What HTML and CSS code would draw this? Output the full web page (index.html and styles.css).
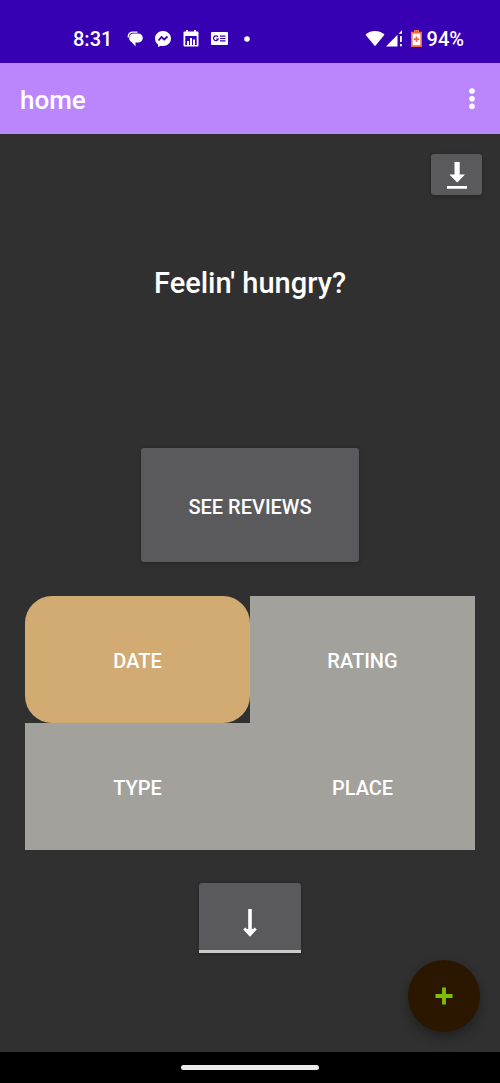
FILE: index.html
```html
<!DOCTYPE html>
<html lang="en">
<head>
<meta charset="utf-8">
<meta name="viewport" content="width=device-width, initial-scale=1">
<title>home</title>
<link rel="stylesheet" href="styles.css">
</head>
<body>
<div class="screen">
  <div class="status">
    <div class="status-group notifications">
      <span class="clock">8:31</span>
      <svg width="16" height="16" viewBox="0 0 16 16" fill="#fff"><path d="M1.200 6.500C1.200 3 3.500 1.200 6 1.200h4.500" fill="none" stroke="#fff" stroke-width="1.300"/><path d="M7 2.400h4a4.800 4.600 0 0 1 0 9.200H8.500V15.600L4.500 11A4.600 4.600 0 0 1 7 2.400z"/></svg>
      <svg width="16" height="16" viewBox="0 0 16 16" fill="#fff"><path d="M8 0c4.500 0 8 3.200 8 7.500S12.500 15 8 15q-1.200 0-2.300-.3L3.200 16l-.3-2.500A7.300 7.300 0 0 1 0 7.500C0 3.200 3.500 0 8 0z"/><path d="M3.500 9.500 6.500 6l2.700 2.500L12.500 5.500" fill="none" stroke="#3700b3" stroke-width="1.800"/></svg>
      <svg width="16" height="17" viewBox="0 0 16 17" fill="#fff"><path fill-rule="evenodd" d="M3 0h2v1.500h6V0h2v1.500h1.500q1 0 1 1v13q0 1-1 1h-13q-1 0-1-1v-13q0-1 1-1H3zM2.300 6v9h11.400V6z"/><path d="M4 11h2v4H4zM7 8h2v7H7zM10 9.500h2V15h-2z"/></svg>
      <svg width="17" height="13" viewBox="0 0 17 13"><rect width="17" height="13" rx="1" fill="#fff"/><path d="M7 5A2.400 2.400 0 1 0 7.200 7H5M9 4.200h5.500M9 6.500h5.500M9 8.800h5.500" fill="none" stroke="#3700b3" stroke-width="1.200"/></svg>
      <svg class="more-dot" width="6" height="6" viewBox="0 0 6 6"><circle cx="3" cy="3" r="2.800" fill="#fff"/></svg>
    </div>
    <div class="status-group">
      <svg width="20" height="17" viewBox="0 0 20 17"><path d="M.500 4.800Q3.800 1 10 1t9.500 3.800L10 16.300z" fill="#fff"/></svg>
      <svg width="17" height="17" viewBox="0 0 17 17" fill="#fff"><path d="M0 16.500 11.500 4.800v11.700z"/><path d="M12.500 3.800 16 .300V3.800zM14 6h1.800v6H14zM14 14h1.800v2.300H14z"/></svg>
      <svg class="battery" width="11" height="17" viewBox="0 0 11 17"><path d="M3 0h5v1.800h3V17H0V1.800h3z" fill="#f4683f"/><path d="M1.600 3.600h7.800v11.600H1.600z" fill="#fff"/><path d="M5.500 6.500v5.400M2.800 9.200h5.400" stroke="#f4683f" stroke-width="1.700"/></svg>
      <span class="clock">94%</span>
    </div>
  </div>

  <header class="appbar">
    <h1 class="appbar-title">home</h1>
    <button class="more" type="button" aria-label="More options">
      <svg width="6" height="22" viewBox="0 0 6 22" fill="#fff"><circle cx="3" cy="3" r="2.800"/><circle cx="3" cy="10.700" r="2.800"/><circle cx="3" cy="18.300" r="2.800"/></svg>
    </button>
  </header>

  <main class="content">
    <button class="raised download" type="button" aria-label="Download">
      <svg width="20" height="28" viewBox="0 0 20 28" fill="#fff"><path d="M7.500 1h5.200v12.500H18L10.200 21.500 2.300 13.500h5.200zM0 25h20v2.800H0z"/></svg>
    </button>
    <h2 class="prompt">Feelin' hungry?</h2>
    <button class="raised reviews" type="button">SEE REVIEWS</button>
    <div class="sorts">
      <button class="sort selected" type="button">DATE</button>
      <button class="sort" type="button">RATING</button>
      <button class="sort" type="button">TYPE</button>
      <button class="sort" type="button">PLACE</button>
    </div>
    <button class="raised direction" type="button" aria-label="Descending">
      <svg width="14" height="28" viewBox="0 0 14 28" fill="none" stroke="#fff"><path d="M7 0v25" stroke-width="3.600"/><path d="M1.300 19.500 7 25.500 12.700 19.500" stroke-width="3"/><path d="M2.500 20h9L7 27z" fill="#fff" stroke="none"/></svg>
    </button>
    <button class="fab" type="button" aria-label="Add">
      <svg width="18" height="18" viewBox="0 0 18 18"><path d="M9 .500v17M.500 9h17" stroke="#7fbf08" stroke-width="3.800"/></svg>
    </button>
  </main>

  <div class="navbar"><span class="handle"></span></div>
</div>
</body>
</html>
```
FILE: styles.css
```css
* { box-sizing: border-box; }
body {
  margin: 0;
  background: #303030;
  color: #fff;
  font-family: Roboto, "Liberation Sans", sans-serif;
}
svg { display: block; flex: none; }
button {
  border: 0;
  padding: 0;
  color: inherit;
  font: 500 20px/24px Roboto, "Liberation Sans", sans-serif;
}
.screen {
  min-height: 100vh;
  display: flex;
  flex-direction: column;
}
.status {
  display: flex;
  justify-content: space-between;
  align-items: center;
  padding: 26px 36px 12px 73px;
  height: 63px;
  background: #3700b3;
}
.status-group { display: flex; align-items: center; gap: 1px; }
.notifications { gap: 12px; }
.clock { font-size: 20px; line-height: 24px; font-weight: 500; }
.notifications .clock { margin-right: 3px; }
.more-dot { margin-left: 4px; }
.battery { margin: 0 4px 0 7px; }
.appbar {
  display: flex;
  justify-content: space-between;
  align-items: center;
  height: 71px;
  padding: 3px 20px 0;
  background: #bb86fc;
}
.appbar-title { margin: 0; font-size: 26px; line-height: 32px; font-weight: 500; }
.more {
  display: flex;
  justify-content: flex-end;
  width: 32px;
  padding: 0 5px 2px 0;
  background: none;
}
.content {
  position: relative;
  flex: 1;
  display: flex;
  flex-direction: column;
  align-items: center;
  padding: 20px 25px;
}
.raised {
  display: flex;
  justify-content: center;
  align-items: center;
  background: #5a5a5c;
  border-radius: 3px;
  box-shadow: 0 1px 4px rgba(0, 0, 0, .3);
}
.download {
  align-self: flex-end;
  width: 51px;
  height: 41px;
  margin-right: -7px;
}
.prompt {
  margin: 70px 0 147px;
  font-size: 29px;
  line-height: 36px;
  font-weight: 500;
}
.reviews { width: 218px; height: 114px; padding-top: 3px; }
.sorts {
  display: grid;
  grid-template-columns: 1fr 1fr;
  width: 100%;
  margin: 34px 0 33px;
}
.sort { height: 127px; padding-top: 2px; background: #a2a19c; }
.selected { background: #d2ab73; border-radius: 27px; }
.direction {
  width: 102px;
  height: 70px;
  padding-top: 12px;
  border-bottom: 3px solid #cbcbcb;
  border-radius: 3px 3px 0 0;
}
.fab {
  position: absolute;
  right: 20px;
  bottom: 20px;
  display: flex;
  justify-content: center;
  align-items: center;
  width: 72px;
  height: 72px;
  border-radius: 50%;
  background: #2b1700;
  box-shadow: 0 5px 12px rgba(0, 0, 0, .35);
}
.navbar {
  display: flex;
  justify-content: center;
  align-items: center;
  height: 31px;
  background: #000;
}
.handle { width: 138px; height: 5px; border-radius: 3px; background: #ebebeb; }
```
